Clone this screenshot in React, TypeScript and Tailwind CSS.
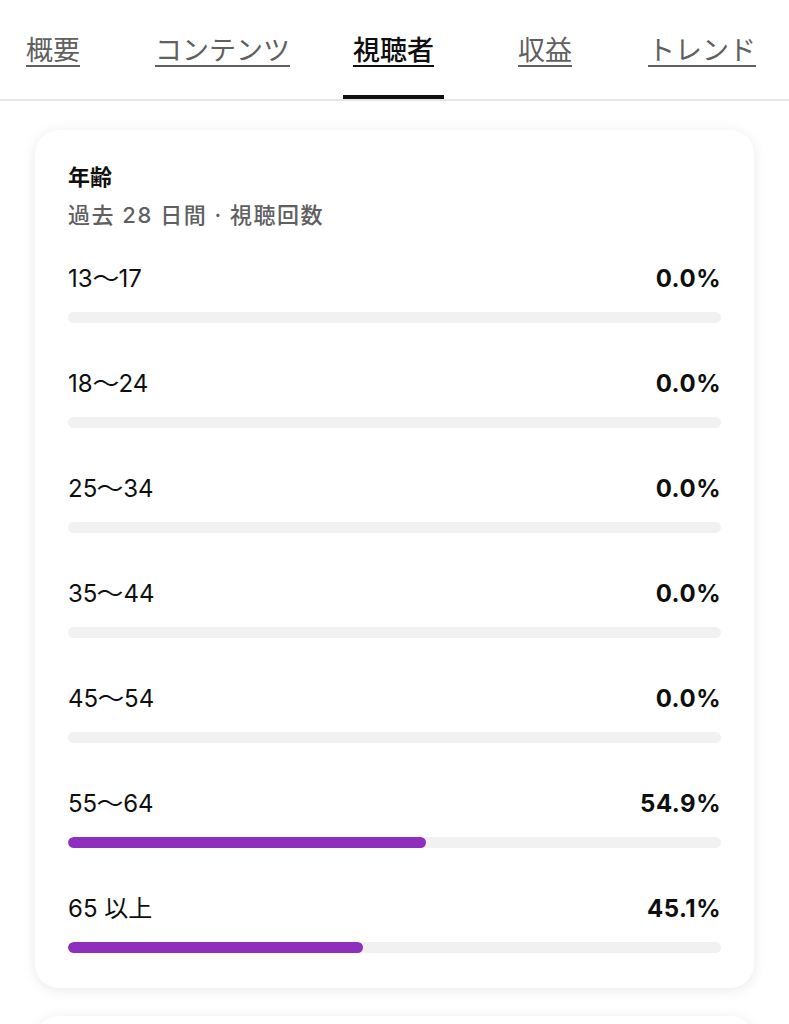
const tabs = [
  { label: '概要', ml: 'ml-0' },
  { label: 'コンテンツ', ml: 'ml-[55px]' },
  { label: '視聴者', ml: 'ml-[43px]', active: true },
  { label: '収益', ml: 'ml-[64px]' },
  { label: 'トレンド', ml: 'ml-[56px]' },
];

const ages = [
  { from: '13', to: '17', pct: 0 },
  { from: '18', to: '24', pct: 0 },
  { from: '25', to: '34', pct: 0 },
  { from: '35', to: '44', pct: 0 },
  { from: '45', to: '54', pct: 0 },
  { from: '55', to: '64', pct: 54.9 },
  { from: '65', to: '', pct: 45.1 },
];

function AgeLabel({ from, to }: { from: string; to: string }) {
  if (!to) return <span className="text-[24px] text-[#0f0f0f]">{from} 以上</span>;
  return (
    <span className="text-[24px] text-[#0f0f0f] flex items-center">
      {from}
      <span className="inline-block mx-[1px] scale-x-[1.12]">～</span>
      {to}
    </span>
  );
}

export default function App() {
  return (
    <div
      className="w-[789px] h-[1024px] overflow-hidden bg-white"
      style={{ fontFamily: 'Inter, "Noto Sans CJK JP", sans-serif' }}
    >
      <div className="flex items-end h-[101px] border-b-2 border-[#e5e5e5] pl-[16px]">
        {tabs.map((t) => (
          <div key={t.label} className={`${t.ml} shrink-0 flex flex-col items-center px-[10px]`}>
            <span
              className={`whitespace-nowrap text-[27px] leading-[34px] underline underline-offset-[5px] decoration-[2px] ${
                t.active ? 'text-[#0f0f0f] font-medium' : 'text-[#606060]'
              }`}
            >
              {t.label}
            </span>
            <div
              className={`mt-[27px] h-[4px] self-stretch -mx-[10px] ${t.active ? 'bg-[#0f0f0f]' : 'bg-transparent'}`}
            />
          </div>
        ))}
      </div>

      <div className="px-[35px] pt-[29px]">
        <div className="bg-white rounded-[24px] shadow-[0_2px_14px_rgba(0,0,0,0.09)] px-[33px] pt-[33px] pb-[35px]">
          <div className="text-[22px] leading-[28px] font-bold text-[#0f0f0f]">年齢</div>
          <div className="mt-[10px] text-[22px] leading-[28px] tracking-[1.5px] text-[#606060] font-medium">
            過去 28 日間 · 視聴回数
          </div>
          <div className="mt-[35px] flex flex-col gap-[46px]">
            {ages.map((a) => (
              <div key={a.from}>
                <div className="flex items-center justify-between h-[30px]">
                  <AgeLabel from={a.from} to={a.to} />
                  <span className="text-[24px] font-bold tracking-[0.5px] text-[#0f0f0f]">{a.pct.toFixed(1)}%</span>
                </div>
                <div className="mt-[18px] h-[11px] rounded-full bg-[#f1f1f1] overflow-hidden">
                  <div className="h-full rounded-full bg-[#8e2fbd]" style={{ width: `${a.pct}%` }} />
                </div>
              </div>
            ))}
          </div>
        </div>
        <div className="mt-[28px] h-[40px] bg-white rounded-t-[24px] shadow-[0_2px_14px_rgba(0,0,0,0.09)]" />
      </div>
    </div>
  );
}
